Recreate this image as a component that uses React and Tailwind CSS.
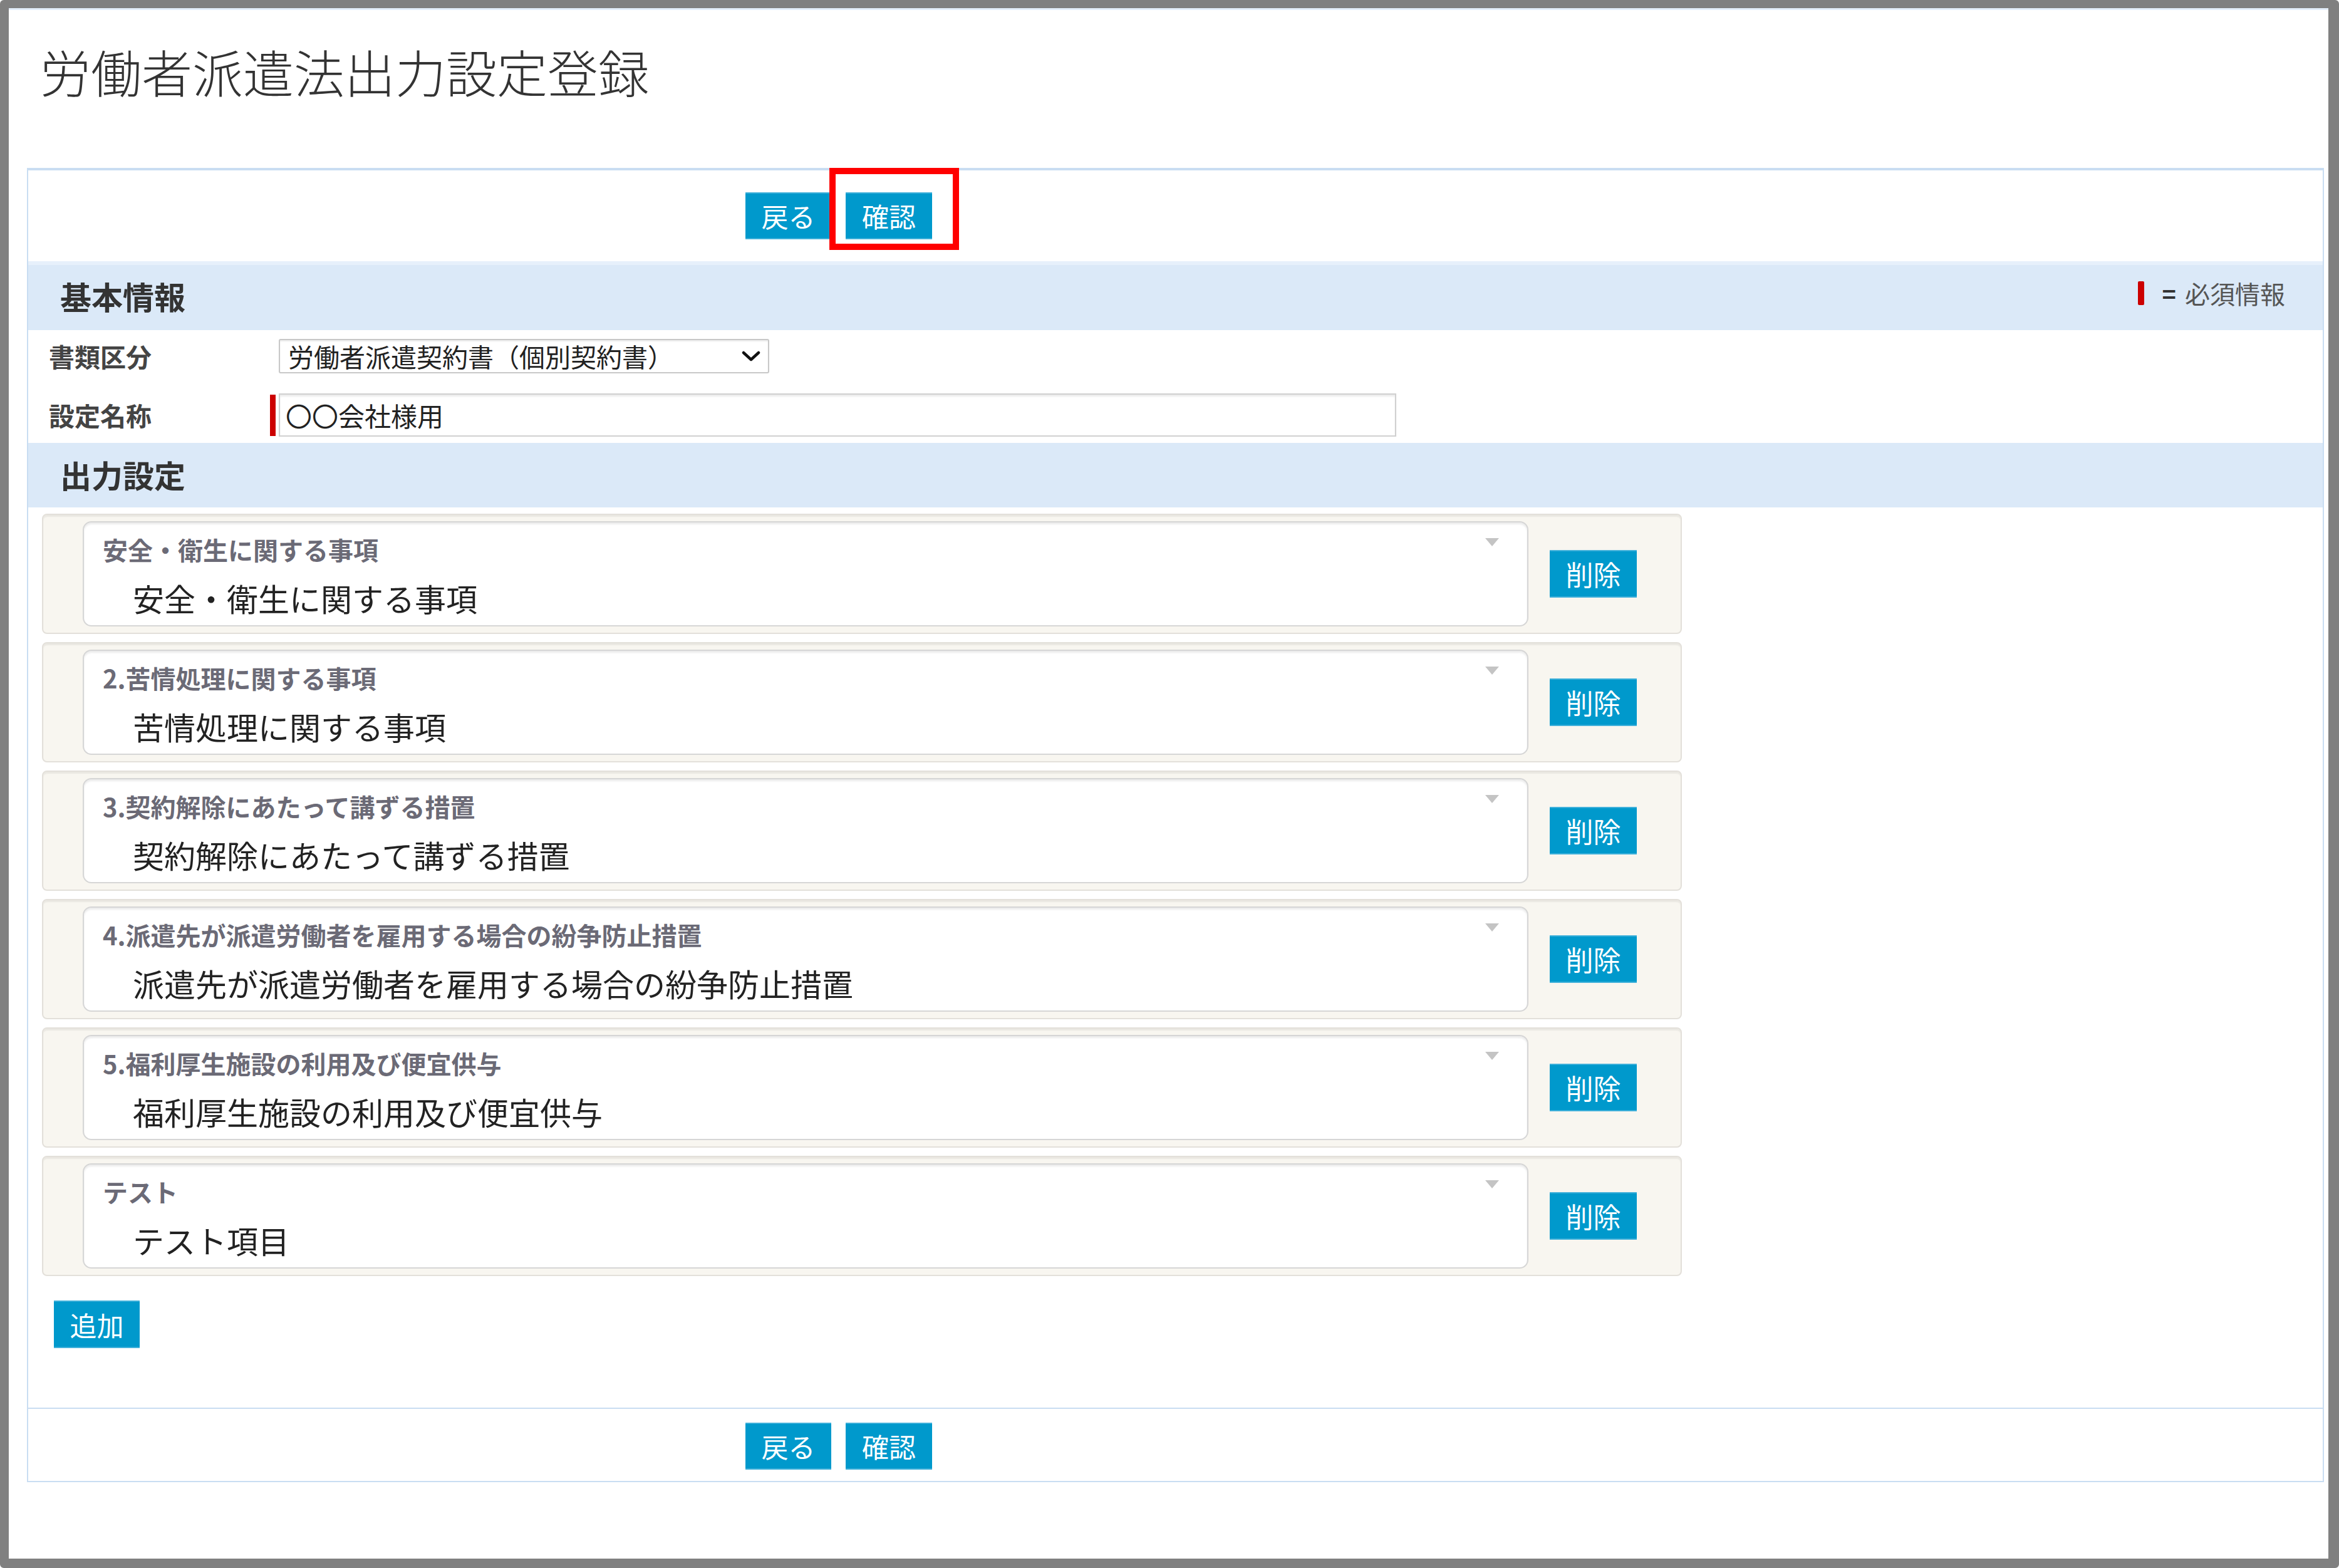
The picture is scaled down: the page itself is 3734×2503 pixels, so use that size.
import React from "react";

const items = [
  { label: "安全・衛生に関する事項", value: "安全・衛生に関する事項" },
  { label: "2.苦情処理に関する事項", value: "苦情処理に関する事項" },
  { label: "3.契約解除にあたって講ずる措置", value: "契約解除にあたって講ずる措置" },
  {
    label: "4.派遣先が派遣労働者を雇用する場合の紛争防止措置",
    value: "派遣先が派遣労働者を雇用する場合の紛争防止措置",
  },
  { label: "5.福利厚生施設の利用及び便宜供与", value: "福利厚生施設の利用及び便宜供与" },
  { label: "テスト", value: "テスト項目" },
];

function BlueButton({ children, className = "" }) {
  return (
    <button
      type="button"
      className={
        "flex items-center justify-center bg-[#0099cc] text-white text-[43px] leading-none border-y-2 border-[#3fb0da] " +
        className
      }
    >
      {children}
    </button>
  );
}

function ActionButtons({ marked }) {
  return (
    <div className="flex items-center gap-[23px] pl-[1145px]">
      <BlueButton className="w-[137px] h-[75px]">戻る</BlueButton>
      <div className="relative">
        <BlueButton className="w-[138px] h-[75px]">確認</BlueButton>
        {marked && (
          <div className="absolute left-[-26px] top-[-39px] w-[207px] h-[131px] border-[10px] border-[#ff0000]" />
        )}
      </div>
    </div>
  );
}

function SectionBand({ title, className = "", children }) {
  return (
    <div className={"flex items-center justify-between bg-[#dbe9f8] " + className}>
      <span className="pl-[51px] text-[50px] font-bold leading-none text-[#333]">{title}</span>
      {children}
    </div>
  );
}

function OutputItem({ label, value }) {
  return (
    <div className="flex items-center w-[2618px] h-[192px] pl-[63px] rounded-[8px] bg-[#f8f6f0] border-2 border-[#e3e0da] shadow-[inset_0_3px_2px_rgba(0,0,0,0.06)]">
      <div className="relative flex flex-col w-[2308px] h-[168px] rounded-[14px] bg-white border-2 border-[#d6d6d6] shadow-[inset_0_3px_3px_rgba(0,0,0,0.08)] pl-[30px] pt-[23px]">
        <span className="text-[40px] font-bold leading-none text-[#6b6a76] whitespace-nowrap">{label}</span>
        <span className="mt-[32px] ml-[48px] text-[50px] leading-none text-[#222] whitespace-nowrap">{value}</span>
        <svg
          className="absolute right-[45px] top-[25px]"
          width="22"
          height="13"
          viewBox="0 0 22 13"
        >
          <path d="M0 0 H22 L11 13 Z" fill="#c4c4c4" />
        </svg>
      </div>
      <BlueButton className="ml-[34px] w-[139px] h-[76px] text-[44px]">削除</BlueButton>
    </div>
  );
}

export default function App() {
  return (
    <div className="w-[3734px] h-[2503px] box-border border-t-[13px] border-l-[14px] border-r-[17px] border-b-[15px] border-[#808080] rounded-[6px] bg-white font-['Noto_Sans_CJK_JP','Noto_Sans',sans-serif] flex flex-col overflow-hidden">
      <div className="h-[3px] bg-[#e4eefa]" />
      <h1 className="mt-[56px] pl-[50px] text-[81px] font-light leading-none text-[#333] whitespace-nowrap">
        労働者派遣法出力設定登録
      </h1>

      <div className="mt-[115px] ml-[29px] w-[3667px] flex flex-col">
        {/* main form */}
        <div className="flex flex-col border-x-2 border-t-[4px] border-b-2 border-[#c9ddf2]">
          <div className="h-[145px] flex items-center">
            <ActionButtons marked />
          </div>

          <SectionBand title="基本情報" className="h-[110px] shadow-[inset_0_6px_0_#e7f0fb]">
            <div className="flex items-center pr-[60px] pb-[8px]">
              <span className="w-[10px] h-[38px] rounded-[2px] bg-[#cc0000]" />
              <span className="ml-[29px] text-[38px] font-bold leading-none text-[#333]">=</span>
              <span className="ml-[14px] text-[40px] leading-none text-[#555]">必須情報</span>
            </div>
          </SectionBand>

          <div className="flex flex-col pt-[14px] pb-[10px]">
            <div className="flex items-center">
              <span className="w-[386px] pl-[33px] text-[41px] font-semibold leading-none text-[#444]">書類区分</span>
              <div className="ml-[14px] flex items-center justify-between w-[783px] h-[55px] rounded-[3px] border-2 border-[#c8c8c8] shadow-[inset_0_2px_2px_rgba(0,0,0,0.08)] pl-[13px] pr-[12px]">
                <span className="text-[41px] leading-none text-[#222] whitespace-nowrap">
                  労働者派遣契約書（個別契約書）
                </span>
                <svg width="30" height="18" viewBox="0 0 30 18">
                  <path
                    d="M3 3 L15 14 L27 3"
                    fill="none"
                    stroke="#111"
                    strokeWidth="4.5"
                    strokeLinecap="round"
                    strokeLinejoin="round"
                  />
                </svg>
              </div>
            </div>
            <div className="mt-[32px] flex items-center">
              <span className="w-[386px] pl-[33px] text-[41px] font-semibold leading-none text-[#444]">設定名称</span>
              <span className="w-[9px] h-[66px] bg-[#cc0000]" />
              <div className="ml-[5px] flex items-center w-[1784px] h-[69px] border-2 border-[#d0d0d0] shadow-[inset_0_3px_3px_rgba(0,0,0,0.08)] pl-[9px]">
                <span className="text-[42px] leading-none text-[#222]">〇〇会社様用</span>
              </div>
            </div>
          </div>

          <SectionBand title="出力設定" className="h-[103px] pb-[4px]" />

          <div className="flex flex-col gap-[13px] pt-[10px] pl-[22px]">
            {items.map((item) => (
              <OutputItem key={item.label} label={item.label} value={item.value} />
            ))}
          </div>

          <div className="mt-[39px] ml-[41px] pb-[95px]">
            <BlueButton className="w-[137px] h-[76px]">追加</BlueButton>
          </div>
        </div>

        {/* footer actions */}
        <div className="h-[117px] flex items-start pt-[22px] border-x-2 border-b-2 border-[#c9ddf2]">
          <ActionButtons />
        </div>
      </div>
    </div>
  );
}
